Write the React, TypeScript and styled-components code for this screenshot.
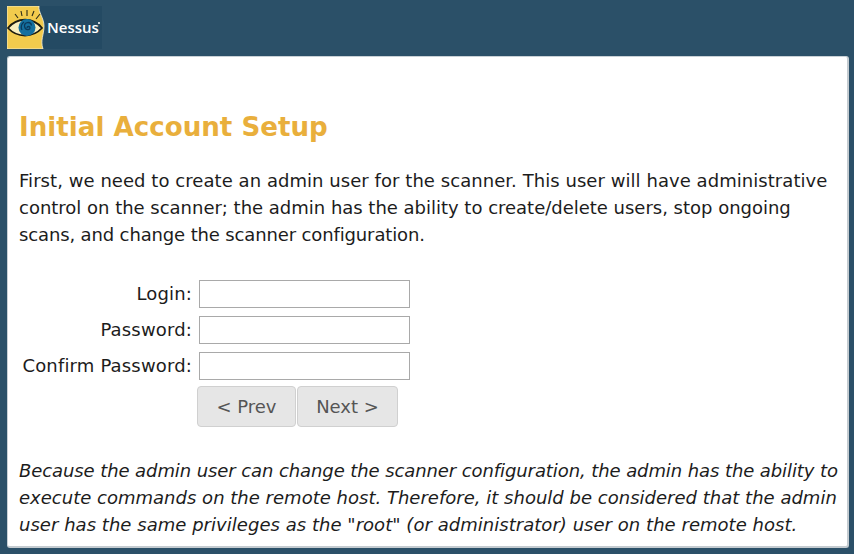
import { createGlobalStyle, styled } from "styled-components";

const GlobalStyle = createGlobalStyle`
  html, body {
    margin: 0;
    padding: 0;
    height: 100%;
    background-color: #2b5068;
    overflow: hidden;
  }
  body {
    font-family: "DejaVu Sans", Verdana, sans-serif;
    color: #1c1c1c;
  }
`;

const Page = styled.div`
  display: flex;
  flex-direction: column;
  width: 854px;
  height: 554px;
`;

const Header = styled.div`
  display: flex;
  height: 56px;
  padding: 6px 0 0 7px;
  box-sizing: border-box;
`;

const Logo = styled.div`
  display: flex;
  width: 95px;
  height: 43px;
  background-color: #244a63;
`;

const LogoMark = styled.svg`
  width: 95px;
  height: 43px;
  display: block;
`;

const LogoText = styled.text`
  font-family: "Open Sans", "Liberation Sans", sans-serif;
  font-size: 15px;
  font-weight: 600;
  fill: #ffffff;
`;

const Panel = styled.div`
  width: 842px;
  height: 492px;
  margin-left: 7px;
  padding: 50px 11px 0;
  box-sizing: border-box;
  background-color: #ffffff;
  border-radius: 3px;
  border: 1px solid #c9d1d6;
  border-right: 2px solid #c4cbd0;
  border-bottom: 2px solid #c4cbd0;
`;

const Title = styled.h1`
  margin: 0 0 20px;
  font-size: 26.15px;
  line-height: 40px;
  font-weight: bold;
  color: #e9af3c;
`;

const Paragraph = styled.p<{ $italic?: boolean }>`
  display: flex;
  flex-direction: column;
  margin: 0;
  font-size: 18px;
  line-height: 27px;
  font-style: ${({ $italic }) => ($italic ? "italic" : "normal")};
  white-space: nowrap;
`;

const Line = styled.span<{ $tracking: number }>`
  letter-spacing: ${({ $tracking }) => $tracking}px;
`;

const Form = styled.div`
  display: flex;
  flex-direction: column;
  row-gap: 8px;
  margin: 32px 0 0;
`;

const FormRow = styled.div`
  display: flex;
  align-items: center;
  column-gap: 7px;
`;

const Label = styled.label`
  width: 173px;
  padding-bottom: 2px;
  text-align: right;
  font-size: 18px;
  letter-spacing: 0.16px;
  white-space: nowrap;
`;

const Input = styled.input`
  width: 211px;
  height: 28px;
  box-sizing: border-box;
  padding: 0 4px;
  background-color: #ffffff;
  border: 1px solid #a9a9a9;
  border-radius: 0;
  outline: none;
`;

const ButtonRow = styled.div`
  display: flex;
  column-gap: 1px;
  margin: 6px 0 0 178px;
`;

const Button = styled.button<{ $wide?: boolean }>`
  height: 41px;
  padding: 0;
  width: ${({ $wide }) => ($wide ? "101px" : "99px")};
  font-family: inherit;
  font-size: 18px;
  color: #555555;
  background-color: #e6e6e6;
  border: 1px solid #d0d0d0;
  border-radius: 4px;
`;

const Note = styled.div`
  margin-top: 30px;
`;

export default function App() {
  return (
    <>
      <GlobalStyle />
      <Page>
        <Header>
          <Logo>
            <LogoMark viewBox="0 0 95 43">
              <path
                d="M0 0H32C31 6 37 12 37 20C37 29 33 34 36 43H0Z"
                fill="#f2cb4d"
                stroke="#f4f1e0"
                strokeWidth="0.8"
              />
              <path
                d="M1 22C10 11 26 11 35 22C26 32 10 32 1 22Z"
                fill="#f8eebd"
                stroke="#1c1c10"
                strokeWidth="1.8"
              />
              <circle cx="20" cy="21.5" r="8.5" fill="#14709f" />
              <path
                d="M20 22a1.5 1.5 0 1 1 1.5 1.5a3.5 3.5 0 1 1 3-4M15 24a6 6 0 0 1 2-8"
                stroke="#0b3a5c"
                strokeWidth="1.3"
                fill="none"
              />
              <path
                d="M11 12L8 8M15 10L14 5M20 10L20 4M25 10L27 5M29 13L33 8"
                stroke="#2a2a18"
                strokeWidth="1.1"
                fill="none"
              />
              <LogoText x="40" y="27">
                Nessus
              </LogoText>
              <circle cx="92" cy="17" r="1" fill="#ffffff" />
            </LogoMark>
          </Logo>
        </Header>
        <Panel>
          <Title>Initial Account Setup</Title>
          <Paragraph>
            <Line $tracking={0.055}>
              First, we need to create an admin user for the scanner. This user will have administrative
            </Line>
            <Line $tracking={-0.012}>
              control on the scanner; the admin has the ability to create/delete users, stop ongoing
            </Line>
            <Line $tracking={-0.136}>scans, and change the scanner configuration.</Line>
          </Paragraph>
          <Form>
            <FormRow>
              <Label>Login:</Label>
              <Input type="text" />
            </FormRow>
            <FormRow>
              <Label>Password:</Label>
              <Input type="password" />
            </FormRow>
            <FormRow>
              <Label>Confirm Password:</Label>
              <Input type="password" />
            </FormRow>
          </Form>
          <ButtonRow>
            <Button>&lt; Prev</Button>
            <Button $wide>Next &gt;</Button>
          </ButtonRow>
          <Note>
            <Paragraph $italic>
              <Line $tracking={-0.09}>
                Because the admin user can change the scanner configuration, the admin has the ability to
              </Line>
              <Line $tracking={0.012}>
                execute commands on the remote host. Therefore, it should be considered that the admin
              </Line>
              <Line $tracking={0.035}>
                user has the same privileges as the "root" (or administrator) user on the remote host.
              </Line>
            </Paragraph>
          </Note>
        </Panel>
      </Page>
    </>
  );
}
